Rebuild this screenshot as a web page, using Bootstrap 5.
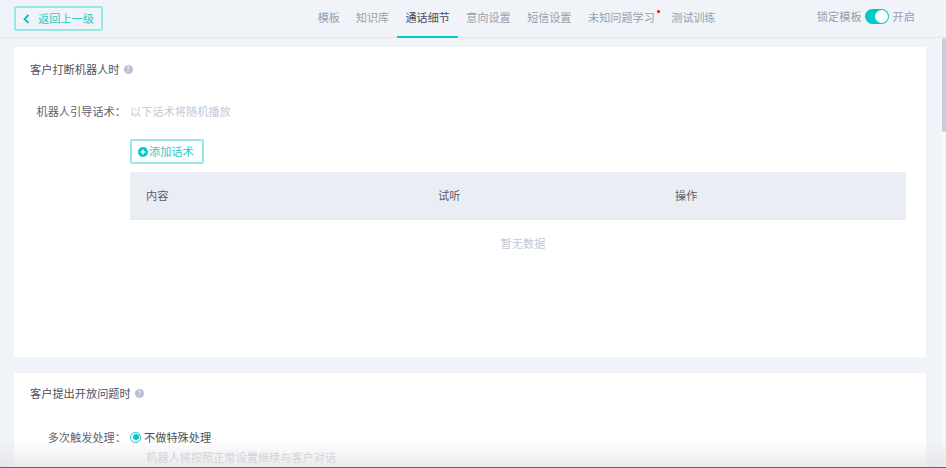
<!DOCTYPE html>
<html lang="zh">
<head>
<meta charset="utf-8">
<link href="https://cdn.jsdelivr.net/npm/bootstrap@5.3.0/dist/css/bootstrap.min.css" rel="stylesheet">
<style>
html,body{height:100%;overflow:hidden}
body{font-family:"Noto Sans CJK SC","Liberation Sans",sans-serif;font-size:11.2px;background:#f0f3f7;color:#5f6272}
.shell{height:468px;overflow:hidden;position:relative}
.topbar{height:38px;border-bottom:1px solid #e2e6ef;padding:0 31px 0 14px;background:#f0f3f7}
.backbtn{width:89px;height:25px;border:2px solid #96e9e7;border-radius:2px;color:#2fc9c8;font-size:11.2px;gap:8px;padding:0 0 0 7px;background:transparent}
.tabstrip{height:38px;position:absolute;left:309.6px;top:0;font-size:11.05px}
.tabitem{color:#98a0ad;height:38px;line-height:35px;padding:0 8.1px;white-space:nowrap;position:relative}
.tabitem.now{color:#474c5d;border-bottom:2px solid #00c9c8;padding:0 8.3px}
.tabitem.later{padding:0 8.3px}
.tabitem.wide{font-size:11.15px;padding:0 8.4px}
.reddot{position:absolute;width:3px;height:3px;border-radius:50%;background:#f00;right:3px;top:10px}
.lockbox{color:#98a0ad;margin-top:-4px;margin-left:auto}
.swtrack{width:24px;height:15px;border-radius:8px;background:#00c9c8;position:relative;display:block;margin:0 4px 0 3px}
.swknob{position:absolute;right:1px;top:1px;width:13px;height:13px;border-radius:50%;background:#fff}
.pagebody{padding:9px 20px 0 14px;gap:16px}
.panel{background:#fff;padding:0 20px 0 16px}
.panelone{height:310px}
.paneltwo{height:120px}
.paneltitle{color:#4c5060;line-height:16px;padding-top:14px;gap:4px}
.paneltwo .paneltitle{padding-top:12px}
.hint{width:9px;height:9px;border-radius:50%;background:#b9bfd2;color:#fff;font-size:7px;line-height:9px;text-align:center;display:inline-block}
.fieldlabel{width:100px;flex:none;text-align:right;color:#5f6272;line-height:16px;padding-right:4px;white-space:nowrap}
.fieldrow-a{margin-top:26px}
.fieldrow-b{margin-top:28px}
.mutedtext{color:#c3c9d8;line-height:16px}
.addbtn{width:74px;height:25px;border:2px solid #96e9e7;border-radius:2px;color:#2fc9c8;background:#fff;gap:1px;padding:0 0 0 6px;font-size:11.2px;margin:20px 0 8px 100px}
.datahead{margin-left:100px;height:48px;background:#ebedf4;border-bottom:1px solid #e8eaf0;color:#5a5e6e;line-height:47px;padding-left:16px}
.headcell-a{width:292px}
.headcell-b{width:237px}
.emptytext{margin-left:100px;padding-left:10px;text-align:center;color:#c3c9d8;line-height:16px;padding-top:15px}
.radiodot{width:11px;height:11px;border-radius:50%;border:1px solid #00c9c8;padding:1.5px;display:block;background:#fff}
.radiodot i{display:block;width:6px;height:6px;border-radius:50%;background:#00c9c8}
.radiorow{gap:3px;color:#4c5060;line-height:16px}
.subhint{color:#c3c9d8;line-height:16px;padding:4px 0 0 116px}
.scrolltrack{position:absolute;right:0;top:38px;bottom:0;width:4px;background:#f5f6fb}
.scrollthumb{position:absolute;right:0;top:38px;width:4px;height:94px;background:#c9cbdb;border-radius:2px}
.bottomfade{position:absolute;left:0;right:0;bottom:0;height:28px;background:linear-gradient(to bottom,rgba(225,225,225,0),rgba(225,225,225,.7));pointer-events:none}
.bottomline{position:absolute;left:0;right:0;bottom:0;height:1px;background:#5e6a60}
</style>
</head>
<body>
<div class="shell">
  <div class="topbar d-flex align-items-center">
    <button class="backbtn btn d-flex align-items-center" type="button"><svg width="7" height="10" viewBox="0 0 7 10"><path d="M5.5 1 1.5 5l4 4" fill="none" stroke="#00c9c8" stroke-width="1.8"/></svg>返回上一级</button>
    <div class="tabstrip d-flex">
      <span class="tabitem">模板</span><span class="tabitem">知识库</span><span class="tabitem now">通话细节</span><span class="tabitem later">意向设置</span><span class="tabitem later">短信设置</span><span class="tabitem wide">未知问题学习<i class="reddot"></i></span><span class="tabitem">测试训练</span>
    </div>
    <div class="lockbox d-flex align-items-center"><span>锁定模板</span><span class="swtrack"><span class="swknob"></span></span><span>开启</span></div>
  </div>
  <div class="pagebody d-flex flex-column">
    <section class="panel panelone">
      <div class="paneltitle d-flex align-items-center"><span>客户打断机器人时</span><span class="hint">?</span></div>
      <div class="fieldrow-a d-flex"><div class="fieldlabel">机器人引导话术：</div><div class="mutedtext">以下话术将随机播放</div></div>
      <button class="addbtn btn d-flex align-items-center" type="button"><svg width="10" height="10" viewBox="0 0 10 10"><circle cx="5" cy="5" r="5" fill="#00c9c8"/><path d="M5 2.5v5M2.5 5h5" stroke="#fff" stroke-width="1.4"/></svg>添加话术</button>
      <div class="datahead d-flex"><span class="headcell-a">内容</span><span class="headcell-b">试听</span><span>操作</span></div>
      <div class="emptytext">暂无数据</div>
    </section>
    <section class="panel paneltwo">
      <div class="paneltitle d-flex align-items-center"><span>客户提出开放问题时</span><span class="hint">?</span></div>
      <div class="fieldrow-b d-flex"><div class="fieldlabel">多次触发处理：</div><div class="radiorow d-flex align-items-center"><span class="radiodot"><i></i></span><span>不做特殊处理</span></div></div>
      <div class="subhint">机器人将按照正常设置继续与客户对话</div>
    </section>
  </div>
  <div class="scrolltrack"></div>
  <div class="scrollthumb"></div>
  <div class="bottomfade"></div>
  <div class="bottomline"></div>
</div>
<script src="https://cdn.jsdelivr.net/npm/bootstrap@5.3.0/dist/js/bootstrap.bundle.min.js"></script>
</body>
</html>
